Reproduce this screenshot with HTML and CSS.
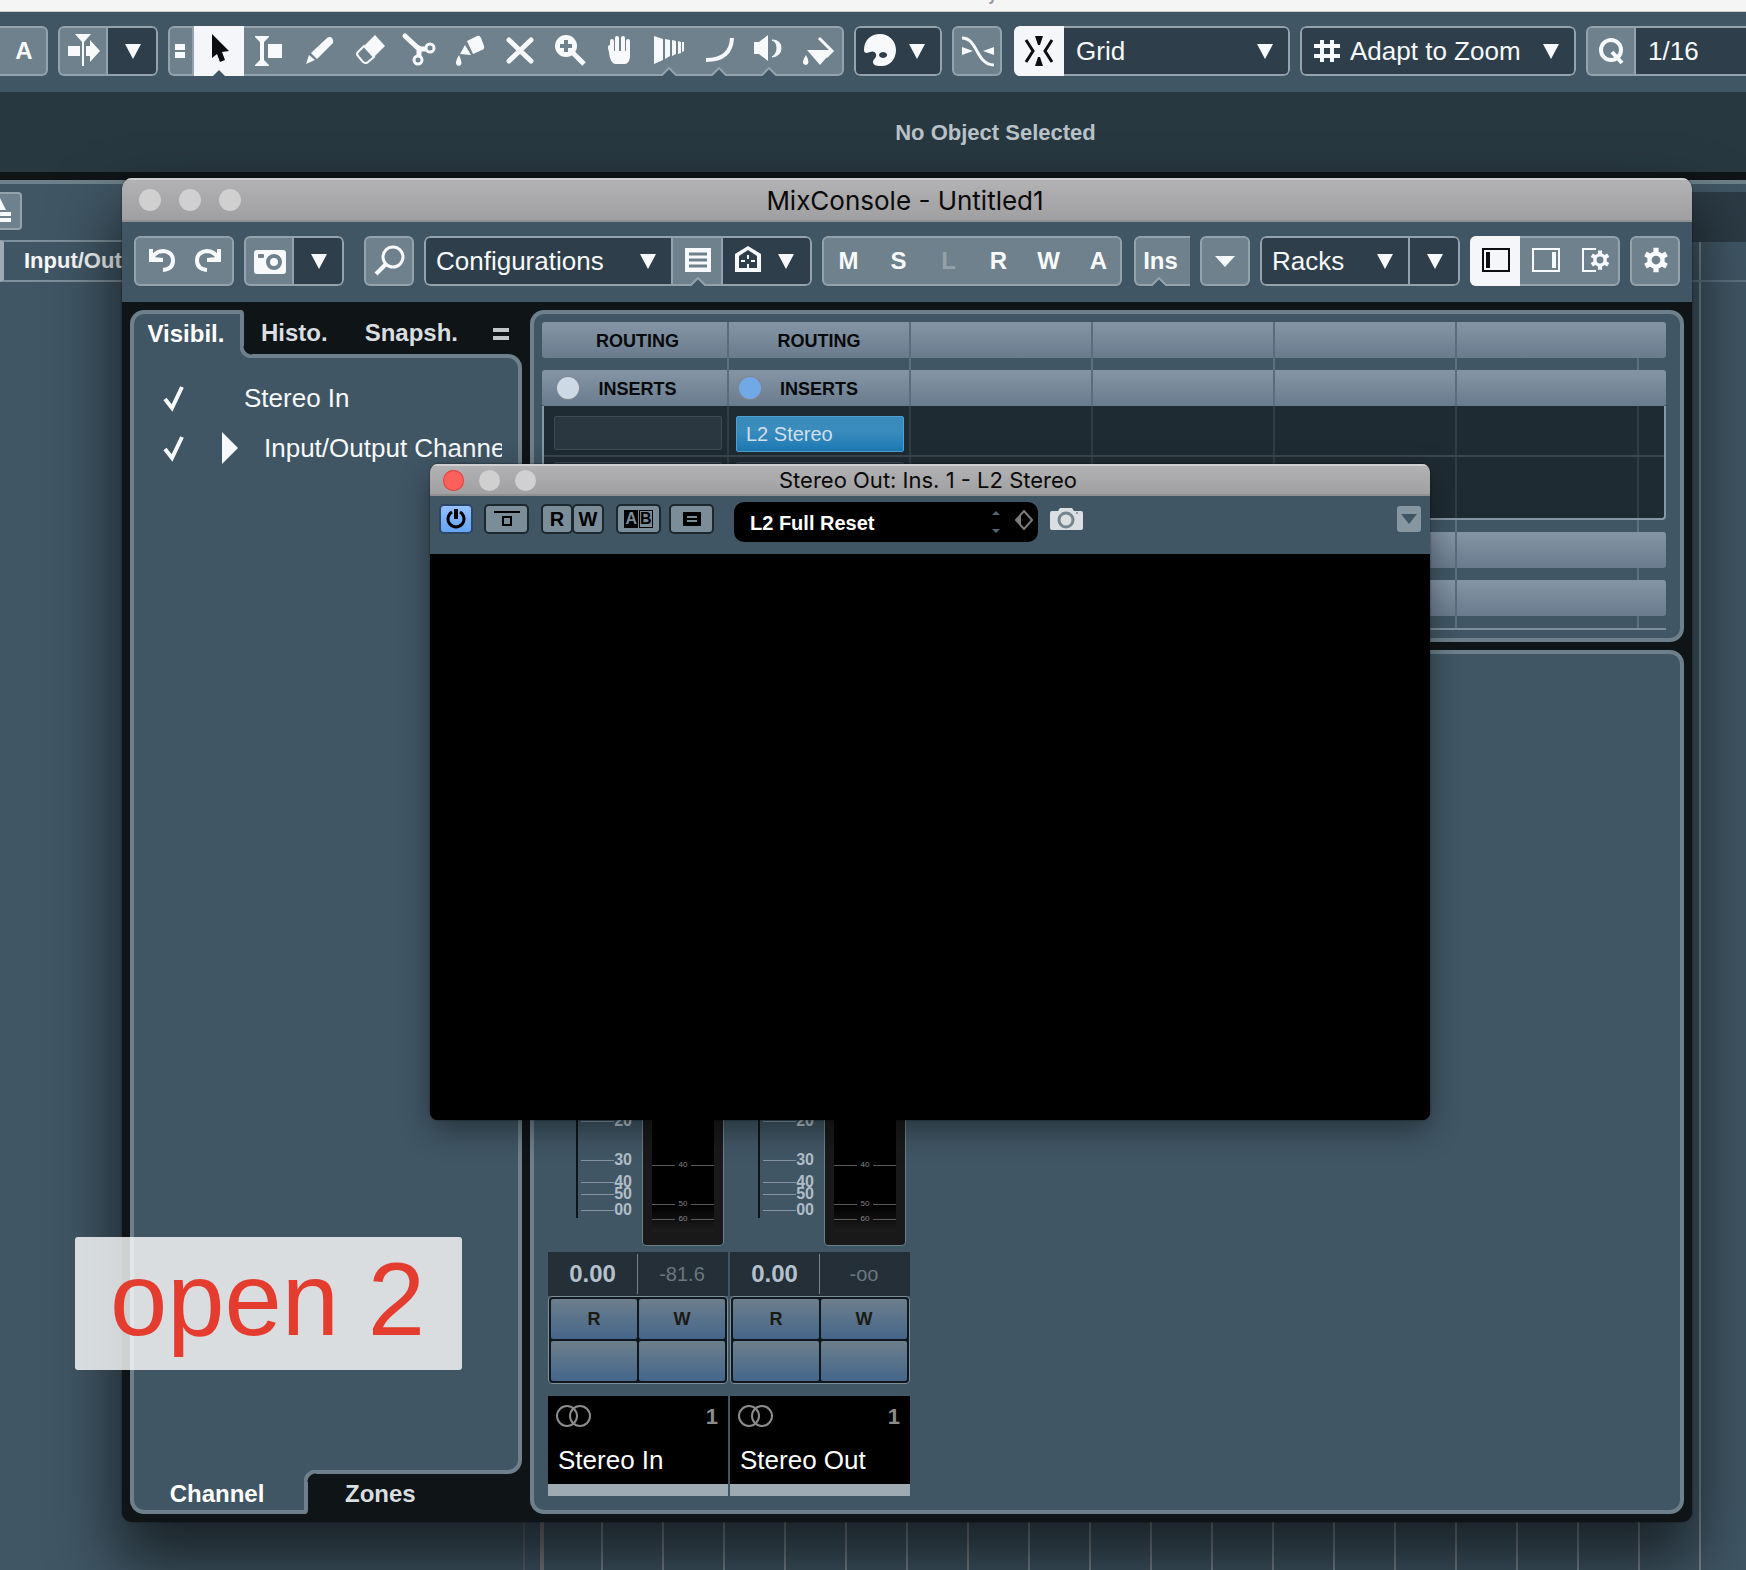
FILE: index.html
```html
<!DOCTYPE html>
<html lang="en">
<head>
<meta charset="utf-8">
<title>MixConsole - Untitled1</title>
<link rel="stylesheet" href="styles.css">
</head>
<body>
<svg class="defs" aria-hidden="true">
  <symbol id="gear" viewBox="0 0 32 32">
    <g stroke="currentColor" stroke-width="6"><path d="M16 2v28M4 9l24 14M4 23l24-14"/></g>
    <circle cx="16" cy="16" r="10" fill="currentColor"/>
    <circle cx="16" cy="16" r="5" class="hole"/>
  </symbol>
  <symbol id="down" viewBox="0 0 16 16"><path d="M0 1h16L8 16z" fill="currentColor"/></symbol>
  <symbol id="notch" viewBox="0 0 18 9"><path d="M1 10l8-8 8 8z" fill="#405664"/><path d="M1 9l8-8 8 8" fill="none" stroke="#93a2ab" stroke-width="2"/></symbol>
  <symbol id="check" viewBox="0 0 24 28"><path d="M3 15l7 9L20 3" fill="none" stroke="currentColor" stroke-width="4"/></symbol>
  <symbol id="stereo" viewBox="0 0 36 24"><g fill="none" stroke="#8c8c8c" stroke-width="2"><circle cx="11" cy="12" r="10"/><circle cx="24" cy="12" r="10"/></g></symbol>
</svg>

<main class="desktop">
  <div class="host-title"><span>Cubase Pro Project - Untitled1</span></div>

  <div class="bar host-bar">
    <div class="group first"><button class="seg letter">A</button></div>
    <div class="group">
      <button class="seg" aria-label="Auto-scroll"><svg class="ico" viewBox="0 0 50 50"><path d="M10 20h12v10H10zM24 8h2v32h-2zM17 8h16l-7 8h-2zM28 20h4v-6l10 11-10 11v-6h-4z" fill="currentColor"/></svg></button>
      <button class="seg dark split" aria-label="Auto-scroll settings"><svg class="tri"><use href="#down"/></svg></button>
    </div>
    <div class="group">
      <button class="seg narrow" aria-label="Toolbox"><svg class="ico" viewBox="0 0 26 50"><path d="M8 18h10v6H8zM8 26h10v6H8z" fill="currentColor"/></svg></button>
      <button class="seg on" aria-label="Select"><svg class="ico" viewBox="0 0 50 50"><path d="M18 8l17 17-7 1 3 8-5 2-3-8-5 4z" fill="#0b0d0e"/><path d="M18 51l7-7 7 7z" fill="#405664"/></svg></button>
      <button class="seg" aria-label="Range"><svg class="ico" viewBox="0 0 50 50"><path d="M11 10h14v1l-5 5v18l5 5v1H11v-1l5-5V16l-5-5zM24 18h14v14H24z" fill="currentColor"/></svg></button>
      <button class="seg" aria-label="Draw"><svg class="ico" viewBox="0 0 50 50"><path d="M33 12q3-2 5 0t1 5L23 33l-6-6zM15 29l6 5-9 4z" fill="currentColor"/></svg></button>
      <button class="seg" aria-label="Erase"><svg class="ico" viewBox="0 0 50 50"><path d="M31 9l10 11-11 11-10-11z" fill="currentColor"/><path d="M20 20l-6 6q-2 2 0 4l5 6q3 2 5 0l6-5z" fill="none" stroke="currentColor" stroke-width="2"/></svg></button>
      <button class="seg" aria-label="Split"><svg class="ico" viewBox="0 0 50 50"><path d="M11 10l14 13h7M25 22v7" fill="none" stroke="currentColor" stroke-width="5" stroke-linecap="round"/><g fill="#6f818d" stroke="currentColor" stroke-width="3"><circle cx="36" cy="22" r="4"/><circle cx="24" cy="34" r="4"/></g></svg></button>
      <button class="seg" aria-label="Glue"><svg class="ico" viewBox="0 0 50 50"><path d="M23 15l10-5q3-1 4 2l3 8q1 3-2 4l-9 4zM21 19l6 10-11-1zM15 29q5 10 0 11-6-1 0-11z" fill="currentColor"/></svg></button>
      <button class="seg" aria-label="Mute"><svg class="ico" viewBox="0 0 50 50"><path d="M15 14l22 21M37 14L15 35" stroke="currentColor" stroke-width="5" stroke-linecap="round"/></svg></button>
      <button class="seg" aria-label="Zoom"><svg class="ico" viewBox="0 0 50 50"><path d="M28 26l12 12" stroke="currentColor" stroke-width="5"/><circle cx="22" cy="20" r="11" fill="currentColor"/><path d="M22 14v12M16 20h12" stroke="#6f818d" stroke-width="4"/></svg></button>
      <button class="seg" aria-label="Hand"><svg class="ico" viewBox="0 0 50 50"><path d="M16 21l2 6v-12M23 27V12M29 27V12M34 27V15" fill="none" stroke="currentColor" stroke-width="4" stroke-linecap="round"/><path d="M14 21l5 4h17v6q-1 7-5 7H22q-4 0-6-6z" fill="currentColor"/></svg></button>
      <button class="seg" aria-label="Comp"><svg class="ico" viewBox="0 0 50 50"><path d="M10 10l9 3v21l-9 4zM21 13l5 1v16l-5 3zM28 14l4 1v13l-4 2zM34 15l3 1v11l-3 1zM38 16h2v9l-2 1z" fill="currentColor"/></svg><svg class="notch"><use href="#notch"/></svg></button>
      <button class="seg" aria-label="Line"><svg class="ico" viewBox="0 0 50 50"><path d="M12 34q25 0 26-22" fill="none" stroke="currentColor" stroke-width="4"/></svg><svg class="notch"><use href="#notch"/></svg></button>
      <button class="seg" aria-label="Play"><svg class="ico" viewBox="0 0 50 50"><path d="M10 16h5l9-7v26l-9-7h-5z" fill="currentColor"/><path d="M28 14q9 0 9 8t-9 9q5-3 5-9t-5-8z" fill="currentColor" stroke="currentColor"/></svg><svg class="notch"><use href="#notch"/></svg></button>
      <button class="seg" aria-label="Colour"><svg class="ico" viewBox="0 0 50 50"><path d="M25 12l13 13-6 6" fill="none" stroke="currentColor" stroke-width="3"/><path d="M13 24h26L26 39zM12 29q5 9 0 10-6-1 0-10z" fill="currentColor"/></svg></button>
    </div>
    <div class="group dark"><button class="seg palette" aria-label="Event colours"><svg class="ico" viewBox="0 0 50 50"><path fill-rule="evenodd" d="M10 24C10 14 17 8 26 8s16 7 16 16-6 16-14 16c-4 0-9 0-9-4 0-3 4-4 3-8-1-3-4-3-6-2s-6 2-6-2zM29 26a4 3 0 1 0 .1 0z" fill="currentColor"/></svg><svg class="tri"><use href="#down"/></svg></button></div>
    <div class="group"><button class="seg" aria-label="Crossfade"><svg class="ico" viewBox="0 0 50 50"><path d="M10 12c16 0 14 27 32 27" fill="none" stroke="currentColor" stroke-width="3"/><path d="M10 21l11 4-11 4zM42 21l-11 4 11 4z" fill="currentColor"/></svg></button></div>
    <div class="group dark snap">
      <button class="seg on" aria-label="Snap"><svg class="ico" viewBox="0 0 50 50"><path d="M21 10h8l-3 9h-2zM21 40h8l-3-9h-2z" fill="#0b0d0e"/><path d="M12 14l7 11-7 11M38 14l-7 11 7 11" fill="none" stroke="#0b0d0e" stroke-width="3"/></svg></button>
      <div class="drop grid-type"><select aria-label="Snap type"><option>Grid</option></select><svg class="tri"><use href="#down"/></svg></div>
    </div>
    <div class="group dark">
      <svg class="hash" viewBox="0 0 26 24"><path d="M8 1v22M18 1v22M0 7h26M0 17h26" stroke="currentColor" stroke-width="4"/></svg>
      <div class="drop adapt"><select aria-label="Grid type"><option>Adapt to Zoom</option></select><svg class="tri"><use href="#down"/></svg></div>
    </div>
    <div class="group dark last">
      <button class="seg light" aria-label="Quantize"><svg class="ico" viewBox="0 0 50 50"><circle cx="25" cy="24" r="10" fill="none" stroke="currentColor" stroke-width="4"/><path d="M26 26l10 11" stroke="currentColor" stroke-width="4"/></svg></button>
      <div class="drop quant split"><select aria-label="Quantize preset"><option>1/16</option></select></div>
    </div>
  </div>

  <div class="infoline">No Object Selected</div>

  <section class="project" aria-label="Project">
    <div class="tracks">
      <div class="track-tools"><button class="divide" aria-label="Divide track list"><svg viewBox="0 0 20 38"><path d="M-6 18L0 6l6 12zM-6 20h17v4H-6zM-6 26h17v4H-6z" fill="currentColor"/></svg></button></div>
      <div class="track">Input/Output Channels</div>
      <div class="track-edge"></div>
    </div>
    <div class="timeline"><div class="ruler"></div><div class="lane"></div></div>
  </section>

  <section class="window mix" aria-label="MixConsole">
    <header class="titlebar"><span class="lights"><i></i><i></i><i></i></span><h1>MixConsole - Untitled1</h1></header>
    <div class="bar mix-bar">
      <div class="group">
        <button class="seg" aria-label="Undo"><svg class="ico" viewBox="0 0 50 50"><path d="M18 22q4-7 11-7 10 1 10 9.500T29 34" fill="none" stroke="currentColor" stroke-width="4"/><path d="M15 13h4v8l10 1v4H15z" fill="currentColor"/></svg></button>
        <button class="seg" aria-label="Redo"><svg class="ico" viewBox="0 0 50 50"><path d="M34 22q-4-7-11-7-10 1-10 9.500T23 34" fill="none" stroke="currentColor" stroke-width="4"/><path d="M37 13h-4v8l-10 1v4h14z" fill="currentColor"/></svg></button>
      </div>
      <div class="group">
        <button class="seg" aria-label="Snapshot"><svg class="ico" viewBox="0 0 50 50"><rect x="10" y="14" width="32" height="24" rx="3" fill="currentColor"/><rect x="14" y="18" width="6" height="4" rx="1" fill="#6f818d"/><circle cx="30" cy="26" r="6" fill="none" stroke="#6f818d" stroke-width="4"/></svg></button>
        <button class="seg dark split" aria-label="Snapshots"><svg class="tri"><use href="#down"/></svg></button>
      </div>
      <div class="group find"><button class="seg" aria-label="Find channel"><svg class="ico" viewBox="0 0 50 50"><circle cx="29" cy="21" r="10" fill="none" stroke="currentColor" stroke-width="3"/><path d="M22 28L12 38" stroke="currentColor" stroke-width="4"/></svg></button></div>
      <div class="group dark">
        <div class="drop config"><select aria-label="Configurations"><option>Configurations</option></select><svg class="tri"><use href="#down"/></svg></div>
        <button class="seg light split" aria-label="Channel types"><svg class="ico" viewBox="0 0 50 50"><path d="M12 12h26v24H12z" fill="currentColor"/><path d="M16 18h18M16 24h18M16 30h18" stroke="#6f818d" stroke-width="3"/></svg><svg class="notch"><use href="#notch"/></svg></button>
        <button class="seg palette split" aria-label="Zones"><svg class="ico" viewBox="0 0 50 50"><path d="M12 18l13-8 13 8v18H12zM16 20v12h18V20l-9-6z" fill="currentColor" fill-rule="evenodd"/><path d="M25 19v4M25 28v4M18 25h4M28 25h4" stroke="currentColor" stroke-width="2"/></svg><svg class="tri"><use href="#down"/></svg></button>
      </div>
      <div class="group">
        <button class="seg letter">M</button><button class="seg letter">S</button><button class="seg letter" disabled>L</button><button class="seg letter">R</button><button class="seg letter">W</button><button class="seg letter">A</button>
      </div>
      <div class="group ins"><button class="seg letter">Ins<svg class="notch"><use href="#notch"/></svg></button></div>
      <div class="group"><button class="seg" aria-label="Suspend"><svg class="wide" viewBox="0 0 20 11"><path d="M0 0h20L10 11z" fill="currentColor"/></svg></button></div>
      <div class="group dark racks">
        <div class="drop rack-drop"><select aria-label="Racks"><option>Racks</option></select><svg class="tri"><use href="#down"/></svg></div>
        <button class="seg split" aria-label="Rack settings"><svg class="tri"><use href="#down"/></svg></button>
      </div>
      <div class="group">
        <button class="seg on" aria-label="Left zone"><svg class="ico" viewBox="0 0 50 50"><path d="M13 13h26v22H13z" fill="none" stroke="#0b0d0e" stroke-width="2"/><path d="M16 16h4v16h-4z" fill="#0b0d0e"/></svg></button>
        <button class="seg" aria-label="Right zone"><svg class="ico" viewBox="0 0 50 50"><path d="M13 13h26v22H13z" fill="none" stroke="currentColor" stroke-width="2"/><path d="M32 16h4v16h-4z" fill="currentColor"/></svg></button>
        <button class="seg" aria-label="Window layout"><svg class="ico" viewBox="0 0 50 50"><path d="M26 13H13v22h13" fill="none" stroke="currentColor" stroke-width="2"/><use href="#gear" x="19" y="13" width="22" height="22"/></svg></button>
      </div>
      <div class="group"><button class="seg" aria-label="Functions"><svg class="ico" viewBox="0 0 50 50"><use href="#gear" x="12" y="10" width="28" height="28"/></svg></button></div>
    </div>

    <div class="mix-body">
      <aside class="zone">
        <nav class="tabs top">
          <button class="tab on">Visibil.</button><button class="tab">Histo.</button><button class="tab">Snapsh.</button>
          <button class="more" aria-label="More tabs"><svg viewBox="0 0 16 12"><path d="M0 0h16v4H0zM0 8h16v4H0z" fill="#c3c6c8"/></svg></button>
        </nav>
        <div class="zone-panel">
          <label class="row"><span class="tick-box"><input type="checkbox" checked><svg><use href="#check"/></svg></span><span class="fold"></span><span class="row-name">Stereo In</span></label>
          <label class="row nested"><span class="tick-box"><input type="checkbox" checked><svg><use href="#check"/></svg></span><span class="fold"><svg viewBox="0 0 16 32"><path d="M0 0l16 16L0 32z" fill="currentColor"/></svg></span><span class="row-name">Input/Output Channels</span></label>
        </div>
        <nav class="tabs bottom"><button class="tab on">Channel</button><button class="tab">Zones</button></nav>
      </aside>

      <div class="mixer">
        <section class="rack" aria-label="Channel racks">
          <div class="head"><span>ROUTING</span><span>ROUTING</span><span></span><span></span><span></span><span></span></div>
          <div class="head inserts"><span><i class="lamp"></i>INSERTS</span><span><i class="lamp blue"></i>INSERTS</span><span></span><span></span><span></span><span></span></div>
          <div class="slots">
            <div class="slot-row"><button class="slot" aria-label="Empty insert"></button><button class="slot used">L2 Stereo</button></div>
            <div class="slot-row"><button class="slot" aria-label="Empty insert"></button><button class="slot" aria-label="Empty insert"></button></div>
          </div>
          <div class="head"><span></span><span></span><span></span><span></span><span></span><span></span></div>
          <div class="head"><span></span><span></span><span></span><span></span><span></span><span></span></div>
          <div class="rule"></div>
        </section>

        <section class="faders" aria-label="Faders">
          <article class="strip">
            <div class="levels">
              <div class="scale"><span>20</span><span class="t30">30</span><span class="t40">40</span><span class="t50">50</span><span class="t00">00</span></div>
              <div class="meter"><div class="meter-face"><span class="m40">40</span><span class="m50">50</span><span class="m60">60</span></div></div>
            </div>
            <div class="values"><b>0.00</b><span>-81.6</span></div>
            <div class="auto"><button>R</button><button>W</button><button aria-label="Listen"></button><button aria-label="Edit"></button></div>
            <div class="name"><div><svg><use href="#stereo"/></svg><b>1</b></div><p>Stereo In</p></div>
          </article>
          <article class="strip">
            <div class="levels">
              <div class="scale"><span>20</span><span class="t30">30</span><span class="t40">40</span><span class="t50">50</span><span class="t00">00</span></div>
              <div class="meter"><div class="meter-face"><span class="m40">40</span><span class="m50">50</span><span class="m60">60</span></div></div>
            </div>
            <div class="values"><b>0.00</b><span>-oo</span></div>
            <div class="auto"><button>R</button><button>W</button><button aria-label="Listen"></button><button aria-label="Edit"></button></div>
            <div class="name"><div><svg><use href="#stereo"/></svg><b>1</b></div><p>Stereo Out</p></div>
          </article>
        </section>
      </div>
    </div>
  </section>

  <section class="window plugin" aria-label="L2 Stereo">
    <header class="titlebar"><span class="lights"><i class="close"></i><i></i><i></i></span><h2>Stereo Out: Ins. 1 - L2 Stereo</h2></header>
    <div class="plugin-bar">
      <button class="pb power" aria-label="Activate"><svg viewBox="0 0 24 24"><path d="M8 5a8 8 0 1 0 8 0" fill="none" stroke="#000" stroke-width="3"/><path d="M12 2v10" stroke="#000" stroke-width="4"/></svg></button>
      <button class="pb" aria-label="Bypass"><svg viewBox="0 0 26 20"><path d="M0 3h26" stroke="#000" stroke-width="2"/><path d="M9 8h8v8H9z" fill="none" stroke="#000" stroke-width="2"/></svg></button>
      <div class="pair"><button class="pb half">R</button><button class="pb half">W</button></div>
      <button class="pb ab" aria-label="Switch A and B"><b>A</b><span>B</span></button>
      <button class="pb" aria-label="Copy setting"><svg viewBox="0 0 26 20"><path d="M4 3h18v14H4z"/><path d="M8 8h10M8 12h10" stroke="#7b8d99" stroke-width="2"/></svg></button>
      <div class="preset"><select aria-label="Preset"><option>L2 Full Reset</option></select>
        <svg class="step" viewBox="0 0 8 22"><path d="M0 4l4-4 4 4zM0 18h8l-4 4z" fill="#4d6878"/></svg>
        <svg class="gem" viewBox="0 0 18 20"><path d="M9 1l8 9-8 9-8-9z" fill="none" stroke="#7a7a7a" stroke-width="2"/><path d="M1 10l5-5v10z" fill="#7a7a7a"/></svg></div>
      <button class="shot" aria-label="Capture"><svg viewBox="0 0 33 24"><path d="M2 4h6l2-3h12l2 3h7q2 0 2 2v15q0 2-2 2H2q-2 0-2-2V6q0-2 2-2z" fill="#dcdfe1"/><circle cx="16" cy="13" r="7" fill="none" stroke="#73858f" stroke-width="3"/><circle cx="27" cy="6" r="1" fill="#73858f"/></svg></button>
      <button class="menu" aria-label="Plug-in menu"><svg viewBox="0 0 16 10"><path d="M0 0h16L8 10z" fill="#405664"/></svg></button>
    </div>
    <div class="plugin-face"></div>
  </section>

  <div class="caption">open 2</div>
</main>
</body>
</html>
```
FILE: styles.css
```css
:root {
  --panel: #405664;
  --key: #6f818d;
  --edge: #93a2ab;
  --well: #2e3f4b;
  --frame: #0f1417;
  --rim: #6d808b;
  --text: #f7f9fa;
}
* { box-sizing: border-box; }
body { margin: 0; background: var(--panel); color: var(--text); font-family: "Liberation Sans", Arial, sans-serif; font-size: 26px; }
button, select { margin: 0; padding: 0; border: 0; background: none; color: inherit; font: inherit; appearance: none; }
h1, h2, p { margin: 0; font-weight: 400; }
svg { display: block; }
.defs { position: absolute; width: 0; height: 0; }
.hole { fill: var(--key); }

.desktop { position: relative; display: flex; flex-direction: column; min-height: 100vh; overflow: hidden; }
.host-title { display: flex; justify-content: center; align-items: flex-end; height: 12px; overflow: hidden; background: #f5f5f5; border-bottom: 1px solid #c9cccd; color: #9a9a9a; font: 24px/30px Inter, sans-serif; padding-left: 220px; }
.host-title span { margin-bottom: 5px; }

/* toolbars */
.bar { display: flex; align-items: center; gap: 10px; height: 80px; background: var(--panel); flex: none; }
.host-bar { padding-bottom: 2px; }
.group { position: relative; display: flex; flex: none; height: 50px; border-radius: 6px; overflow: hidden; background: var(--key); }
.group::after { content: ""; position: absolute; inset: 0; border: 2px solid var(--edge); border-radius: 6px; pointer-events: none; }
.group.dark { background: var(--well); }
.group.first { width: 48px; justify-content: flex-end; border-radius: 0 6px 6px 0; }
.group.first::after { border-left: 0; border-radius: 0 6px 6px 0; }
.group.last { flex: 1; border-radius: 6px 0 0 6px; }
.group.last::after { border-right: 0; border-radius: 6px 0 0 6px; }
.seg { position: relative; display: flex; align-items: center; justify-content: center; width: 50px; height: 50px; }
.seg.dark { background: var(--well); }
.seg.light { background: var(--key); }
.seg.narrow { width: 26px; border-right: 2px solid var(--edge); }
.seg.on { z-index: 1; background: #f5f6f9; }
.seg.letter { font-size: 24px; font-weight: 700; }
.mix-bar .letter { padding-left: 3px; }
.seg:disabled { color: #93a1aa; }
.split { position: relative; box-shadow: -2px 0 var(--edge); }
.palette { width: 88px; justify-content: flex-start; }
.palette.split { width: 89px; }
.palette .tri { margin-left: 5px; }
.ico { width: 50px; height: 50px; flex: none; }
.narrow .ico { width: 26px; }
.tri { width: 16px; height: 16px; flex: none; }
.wide { width: 20px; height: 11px; }
.notch { position: absolute; z-index: 2; left: 16px; bottom: 0; width: 18px; height: 9px; }
.snap { margin-left: 2px; }
.drop { display: grid; align-items: center; }
.drop select { grid-area: 1 / 1; width: 100%; height: 50px; padding-left: 12px; }
.drop .tri { grid-area: 1 / 1; justify-self: end; margin-right: 17px; pointer-events: none; }
.grid-type { width: 226px; }
.hash { width: 26px; height: 24px; margin: 13px 0 0 14px; }
.adapt { width: 236px; }
.adapt select { padding-left: 10px; }
.quant { width: 150px; }
.infoline { flex: none; height: 80px; padding-left: 245px; background: #283840; color: #b9c2c8; text-align: center; font-size: 22px; font-weight: 700; line-height: 81px; }

/* project window behind */
.project { flex: 1; display: flex; border-top: 8px solid var(--frame); box-shadow: inset 0 4px var(--rim); padding-top: 12px; }
.tracks { flex: none; display: flex; flex-direction: column; width: 544px; border-right: 4px solid #7b7d80; }
.track-tools { height: 48px; }
.track-edge { flex: 1; align-self: flex-end; width: 17px; border-left: 2px solid #60666d; }
.divide { display: block; width: 22px; height: 38px; border: 2px solid var(--edge); border-left: 0; border-radius: 0 4px 4px 0; background: var(--key); }
.divide svg { width: 20px; height: 38px; margin-top: -2px; }
.track { height: 42px; padding-left: 20px; border: solid #7d8f9a; border-width: 2px 0; border-left: 4px solid #9dabb3; font-size: 22px; font-weight: 700; line-height: 38px; white-space: nowrap; overflow: hidden; }
.timeline { flex: 1; display: flex; flex-direction: column; }
.ruler { height: 50px; background: #2c3b45; }
.lane { flex: 1; background: linear-gradient(#5d7280, #5d7280) 0 38px / 100% 2px no-repeat, repeating-linear-gradient(90deg, transparent 0 59px, #7a868e 59px 61px) -2px 0; }

/* windows */
.window { position: absolute; display: flex; flex-direction: column; overflow: hidden; }
.mix { top: 178px; left: 122px; right: 54px; bottom: 48px; border-radius: 10px; background: var(--frame); box-shadow: 0 0 2px rgba(0,0,0,.6), 0 36px 64px 6px rgba(0,0,0,.6); }
.plugin { top: 464px; left: 430px; width: 1000px; height: 656px; border-radius: 8px; background: #000; box-shadow: 0 0 2px rgba(0,0,0,.6), 0 10px 30px rgba(0,0,0,.4); }
.titlebar { display: grid; align-items: center; flex: none; height: 44px; background: linear-gradient(#b3b2b4, #9f9ea0); box-shadow: inset 0 2px #cfcfd0, inset 0 -2px #8f9092; color: #0a0a0a; font-family: Inter, sans-serif; }
.titlebar h1, .titlebar h2 { grid-area: 1 / 1; text-align: center; font-size: 26px; padding-right: 4px; }
.titlebar h2 { font-size: 22px; }
.lights { grid-area: 1 / 1; display: flex; gap: 18px; padding-left: 17px; }
.lights i { width: 22px; height: 22px; border-radius: 50%; background: #d0d0d0; }
.lights .close { background: #fc605c; box-shadow: inset 0 0 0 1px #e0443e; }
.mix-bar { padding: 0 12px; padding-bottom: 2px; }
.find { margin-left: 10px; }
.config { width: 249px; }
.config select, .rack-drop select { padding-left: 12px; }
.ins { margin-left: 2px; width: 56px; border-radius: 6px 0 0 6px; }
.ins::after { border-right: 0; border-radius: 6px 0 0 6px; }
.racks { width: 200px; }
.rack-drop { width: 150px; }
.mix-body { flex: 1; display: flex; gap: 8px; padding: 8px; min-height: 0; }

/* left zone */
.zone { display: flex; flex-direction: column; flex: none; width: 392px; }
.zone-panel { flex: 1; padding: 15px 16px; border: 4px solid var(--rim); border-radius: 0 14px 14px 0; background: var(--panel); }
.tabs { position: relative; display: flex; height: 44px; }
.tab { height: 44px; padding: 0; color: #d9dee1; font-size: 24px; font-weight: 700; }
.top .tab { margin-left: 17px; padding-top: 2px; }
.top .tab + .tab + .tab { margin-left: 37px; }
.tab.on { position: relative; color: #fff; background: var(--panel); border: 4px solid var(--rim); }
.top .tab.on { width: 114px; height: 48px; margin: 0; padding: 0 2px 5px 0; border-bottom: 0; border-radius: 14px 4px 0 0; }
.bottom .tab.on { width: 178px; height: 44px; margin-top: -4px; border-top: 0; border-radius: 0 0 4px 14px; padding: 8px 4px 0 0; }
.tab.on::after { content: ""; position: absolute; left: 100%; width: 12px; height: 12px; }
.top .tab.on::after { bottom: 0; background: radial-gradient(circle at 100% 0, var(--frame) 8px, var(--rim) 9px 12px, var(--panel) 13px); }
.bottom .tab.on::after { top: 0; background: radial-gradient(circle at 100% 100%, var(--frame) 8px, var(--rim) 9px 12px, var(--panel) 13px); }
.bottom { height: 40px; }
.bottom .tab { height: 40px; margin-left: 37px; }
.bottom .tab.on { margin-left: 0; }
.more { margin-left: auto; padding-right: 13px; }
.more svg { width: 16px; height: 12px; margin-top: 4px; }
.row { display: flex; align-items: center; height: 50px; }
.tick-box { display: grid; width: 24px; height: 28px; margin-left: 12px; flex: none; }
.tick-box input { grid-area: 1 / 1; margin: 0; opacity: 0; }
.tick-box svg { grid-area: 1 / 1; width: 24px; height: 28px; }
.fold { flex: none; width: 16px; margin-left: 36px; }
.fold svg { width: 16px; height: 32px; }
.row-name { overflow: hidden; white-space: nowrap; margin-left: 6px; line-height: 34px; }
.nested .row-name { margin-left: 26px; }

/* racks */
.mixer { flex: 1; display: flex; flex-direction: column; gap: 8px; min-width: 0; }
.rack, .faders { border: 4px solid var(--rim); border-radius: 14px; background: var(--panel); }
.rack { flex: none; height: 332px; padding: 8px 14px 8px 8px; display: flex; flex-direction: column; gap: 12px; background: repeating-linear-gradient(90deg, #5c7180 0 2px, transparent 2px 182px) 193px 8px / 100% 308px no-repeat var(--panel); }
.head { display: grid; grid-template-columns: 187px repeat(4, 182px) 1fr; flex: none; height: 36px; border-radius: 3px; overflow: hidden; background: linear-gradient(#8595a6, #697b8d); color: #07090a; font-size: 18px; font-weight: 700; }
.head span { display: flex; align-items: center; justify-content: center; border-right: 2px solid #5b6c7a; padding-top: 2px; }
.head span:first-child { padding-left: 6px; }
.head span:last-child { border: 0; }
.inserts span { position: relative; }
.lamp { position: absolute; left: 10px; top: 7px; width: 22px; height: 22px; border-radius: 50%; background: #cdd9e5; box-shadow: 0 0 0 1px #7c8791; }
.inserts span:first-child .lamp { left: 15px; }
.lamp.blue { background: #70a9e5; }
.slots { flex: none; height: 114px; margin-top: -12px; border: 2px solid #8796a5; border-top: 0; border-radius: 0 0 4px 4px; background: repeating-linear-gradient(90deg, #313d45 0 2px, transparent 2px 182px) 183px 0 / 100% 100% no-repeat #1f2b33; }
.slot-row { display: flex; gap: 14px; height: 51px; padding: 10px; border-bottom: 2px solid #3a474f; }
.slot-row + .slot-row { border: 0; padding-top: 5px; }
.slot { width: 168px; height: 34px; border: 1px solid #3e4b55; border-radius: 2px; background: #2b3740; }
.slot.used { height: 36px; padding-left: 9px; border-color: #4ea0cf; background: linear-gradient(#3a8cbd 40%, #1d7ab5); color: #d0dfe9; font-size: 20px; text-align: left; }
.rule { height: 2px; background: #7d8f9c; }

/* fader strips */
.faders { flex: 1; display: flex; gap: 2px; padding: 14px; min-height: 0; }
.strip { display: flex; flex-direction: column; justify-content: flex-end; width: 180px; }
.levels { display: flex; align-items: flex-end; height: 150px; padding-left: 28px; }
.scale { width: 56px; height: 116px; margin: 0 10px 34px 0; border-left: 2px solid #0e1519; color: #b0bcc6; font-size: 16px; font-weight: 700; padding: 18px 0 0 3px; }
.scale span { display: flex; align-items: center; height: 2px; line-height: 2px; }
.scale span::before { content: ""; flex: 1; height: 1px; background: #8494a0; }
.scale .t30 { margin-top: 37px; }
.scale .t40 { margin-top: 20px; }
.scale .t50 { margin-top: 10px; }
.scale .t00 { margin-top: 14px; }
.meter { width: 82px; height: 150px; margin-bottom: 6px; padding: 0 9px 13px; border: 1px solid #6d808b; border-radius: 4px; background: #191919; }
.meter-face { height: 100%; padding-top: 67px; background: linear-gradient(#000 108px, #1e1e1e); color: #858585; font-size: 8px; }
.meter-face span { display: flex; align-items: center; gap: 4px; height: 2px; line-height: 2px; }
.meter-face span::before, .meter-face span::after { content: ""; flex: 1; height: 1px; background: #5b5b5b; }
.m50 { margin-top: 37px; }
.m60 { margin-top: 13px; }
.values { display: grid; grid-template-columns: 89px 91px; align-items: center; height: 44px; background: #252f37; text-align: center; font-size: 24px; line-height: 40px; color: #b4c1cc; }
.values span { border-left: 1px solid #78848c; padding-right: 2px; color: #6a7780; font-size: 20px; }
.auto { display: grid; grid-template: 1fr 1fr / 86px 1fr; gap: 2px; height: 88px; padding: 2px; border: 1px solid #7d8f9a; border-radius: 4px; background: #10181d; }
.auto button { min-height: 0; border-radius: 2px; background: linear-gradient(#6d7f8d, #45668a); color: #1b1a12; font-size: 18px; font-weight: 700; }
.name { height: 100px; margin-top: 12px; padding: 8px 10px 0 8px; border-bottom: 12px solid #9eabb3; background: #000; }
.name div { display: flex; justify-content: space-between; color: #8c8c8c; font-size: 22px; line-height: 26px; }
.name svg { width: 36px; height: 24px; }
.name p { padding-left: 2px; margin-top: 15px; line-height: 30px; color: #fff; }

/* plug-in window */
.plugin .titlebar { height: 32px; }
.plugin .lights { gap: 15px; padding-left: 13px; align-items: center; }
.plugin .lights i { width: 21px; height: 21px; }
.plugin-bar { display: flex; align-items: flex-start; flex: none; height: 58px; padding: 8px 9px; background: var(--panel); }
.pb { display: flex; align-items: center; justify-content: center; width: 45px; height: 30px; margin-right: 8px; border: 2px solid #1c272e; border-radius: 5px; background: #7b8d99; color: #000; font-size: 20px; font-weight: 700; }
.pb svg { width: 26px; height: 20px; }
.power { width: 34px; margin-right: 11px; background: linear-gradient(#93c1ff, #66a3f4); border-color: #2c4763; }
.power svg { width: 24px; height: 24px; }
.pair { display: flex; margin: 0 13px 0 4px; }
.half { width: 32px; margin: 0 -1px 0 0; }
.ab { font-size: 16px; gap: 1px; }
.ab b { padding: 0 1px; background: #000; color: #7b8d99; line-height: 18px; }
.ab span { border: 1px solid #000; line-height: 16px; }
.preset { display: flex; align-items: center; width: 304px; height: 40px; margin: -2px 12px 0; padding: 0 5px 0 16px; border-radius: 10px; background: #000; }
.preset select { flex: 1; padding-top: 1px; color: #fff; font-size: 20px; font-weight: 700; }
.step { width: 8px; height: 22px; margin-right: 15px; }
.gem { width: 18px; height: 20px; margin-bottom: 4px; }
.shot svg { width: 33px; height: 24px; margin-top: 3px; }
.menu { display: flex; align-items: center; justify-content: center; width: 24px; height: 26px; margin: 2px 0 0 auto; border-radius: 3px; background: #8797a2; }
.menu svg { width: 16px; height: 10px; }
.plugin-face { flex: 1; background: #000; }

.caption { position: absolute; left: 75px; bottom: 200px; width: 387px; height: 133px; padding-left: 35px; border-radius: 3px; background: rgba(255,255,255,.8); color: #e53c30; font-size: 103px; line-height: 126px; }
```
